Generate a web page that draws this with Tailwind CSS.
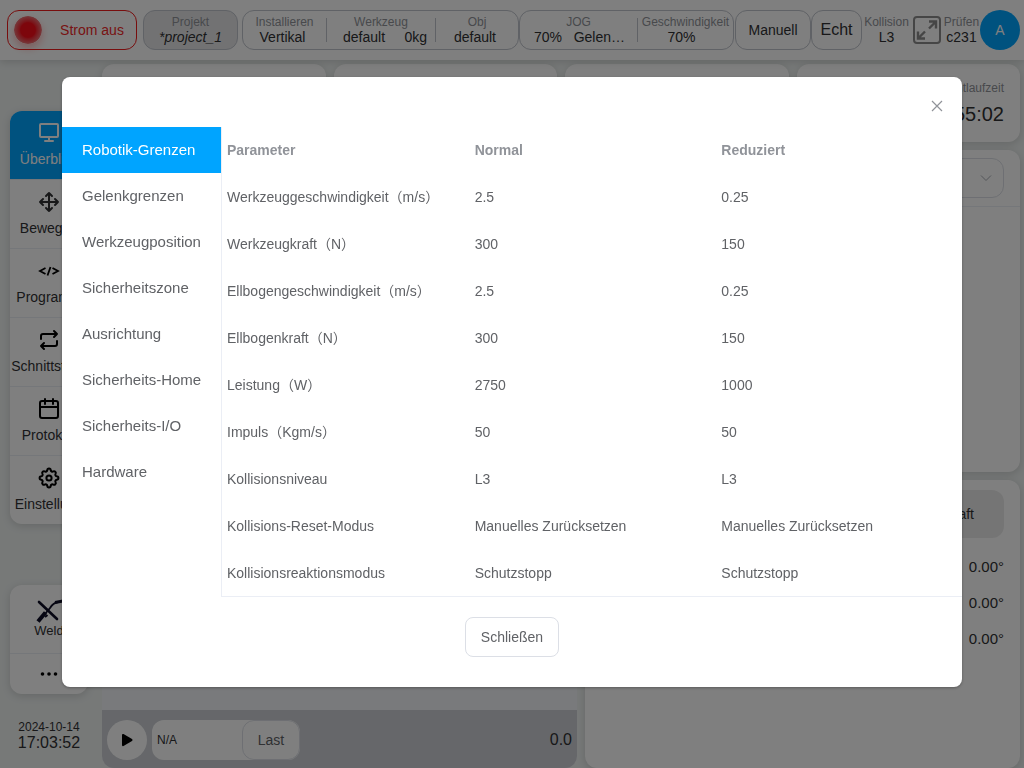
<!DOCTYPE html>
<html lang="de">

<head>
    <meta charset="UTF-8">
    <meta name="viewport" content="width=device-width, initial-scale=1.0">
    <title>Roboter - Überblick</title>
    <script src="https://cdn.jsdelivr.net/npm/@tailwindcss/browser@4"></script>
</head>

<body class="h-screen overflow-hidden bg-[#eef2f1] font-['Liberation_Sans','Noto_Sans_CJK_SC',sans-serif] text-sm text-[#303133]">

    <div class="flex h-screen flex-col">

        <!-- Header -->
        <header class="relative flex h-[60px] shrink-0 items-center justify-between bg-white pl-[7px] pr-1 shadow-[0_2px_8px_rgba(0,0,0,0.15)]">
            <button class="mr-1.5 flex h-10 w-[130px] shrink-0 items-center rounded-xl border border-[#f01c1c] pl-1.5 text-[#f02828]">
                <svg class="size-7 rounded-full shadow-[0_4px_8px_rgba(245,15,15,0.3)]" viewBox="0 0 28 28">
                    <defs>
                        <radialGradient id="led">
                            <stop offset="0.52" stop-color="#fa0c18" />
                            <stop offset="0.62" stop-color="#f42a34" />
                            <stop offset="1" stop-color="#ec7478" />
                        </radialGradient>
                    </defs>
                    <circle cx="14" cy="14" r="14" fill="url(#led)" />
                </svg>
                <span class="flex-1 pl-1.5">Strom aus</span>
            </button>

            <button class="mr-1 flex h-10 w-[95px] shrink-0 flex-col items-center justify-center rounded-xl border border-[#c0c4cc] bg-[#e4e5e7]">
                <span class="text-xs leading-[14px] text-[#909399]">Projekt</span>
                <span class="leading-4 italic">*project_1</span>
            </button>

            <div class="flex h-10 w-[277px] shrink-0 items-center rounded-xl border border-[#c0c4cc] text-center">
                <div class="w-[83px]">
                    <p class="text-xs leading-[14px] text-[#909399]">Installieren</p>
                    <p class="pr-1 leading-4">Vertikal</p>
                </div>
                <div class="h-6 w-px bg-[#c0c4cc]"></div>
                <div class="w-[108px] px-2">
                    <p class="text-xs leading-[14px] text-[#909399]">Werkzeug</p>
                    <p class="flex justify-between pl-2 leading-4"><span>default</span><span>0kg</span></p>
                </div>
                <div class="h-6 w-px bg-[#c0c4cc]"></div>
                <div class="flex-1">
                    <p class="text-xs leading-[14px] text-[#909399]">Obj</p>
                    <p class="pr-1 leading-4">default</p>
                </div>
            </div>

            <div class="flex h-10 w-[215px] shrink-0 items-center rounded-xl border border-[#c0c4cc] text-center">
                <div class="w-[117px] px-3">
                    <p class="text-xs leading-[14px] text-[#909399]">JOG</p>
                    <p class="flex justify-between pl-0.5 leading-4"><span>70%</span><span>Gelen…</span></p>
                </div>
                <div class="h-6 w-px bg-[#c0c4cc]"></div>
                <div class="flex-1">
                    <p class="text-xs leading-[14px] whitespace-nowrap text-[#909399]">Geschwindigkeit</p>
                    <p class="pr-2 leading-4">70%</p>
                </div>
            </div>

            <button class="ml-px h-10 w-[76px] shrink-0 rounded-xl border border-[#c0c4cc]">Manuell</button>
            <button class="h-10 w-[51px] shrink-0 rounded-xl border border-[#c0c4cc] text-base">Echt</button>

            <div class="w-[49px] shrink-0 text-center">
                <p class="text-xs leading-[14px] text-[#909399]">Kollision</p>
                <p class="leading-4">L3</p>
            </div>
            <button class="shrink-0 text-[#8c8c8c]" aria-label="Vollbild">
                <svg class="size-8" viewBox="0 0 32 32" fill="none" stroke="currentColor" stroke-width="2">
                    <rect x="3" y="3" width="26" height="26" rx="3" />
                    <path d="M18 7.500h7v7M25 7.500l-7 7M7 17.500v7h7M7 24.500l7-7" stroke-width="2.400" />
                </svg>
            </button>
            <div class="w-[37px] shrink-0 text-center">
                <p class="text-xs leading-[14px] text-[#909399]">Prüfen</p>
                <p class="leading-4">c231</p>
            </div>
            <button class="size-10 shrink-0 rounded-full bg-[#00a4ff] text-white">A</button>
        </header>

        <div class="flex min-h-0 flex-1">

            <!-- Sidebar -->
            <aside class="flex w-[102px] shrink-0 flex-col pl-2.5 pr-3.5">
                <nav class="mt-[51px] divide-y divide-[#ebeef5] overflow-hidden rounded-xl bg-white text-center shadow-[0_2px_8px_rgba(0,0,0,0.15)]">
                    <a href="#" class="flex h-[69px] flex-col items-center bg-[#00a4ff] pt-2.5 text-white">
                        <svg class="size-6" viewBox="0 0 24 24" fill="none" stroke="currentColor" stroke-width="2" stroke-linejoin="round" stroke-linecap="round">
                            <rect x="3" y="3" width="18" height="13" rx="1" />
                            <path d="M8 20h8M12 16v4" />
                        </svg>
                        <span class="mt-1">Überblick</span>
                    </a>
                    <a href="#" class="flex h-[69px] flex-col items-center pt-2.5">
                        <svg class="size-6" viewBox="0 0 24 24" fill="none" stroke="currentColor" stroke-width="2" stroke-linejoin="round" stroke-linecap="round">
                            <path d="M12 3v18M3 12h18M9 6l3-3 3 3M9 18l3 3 3-3M6 9l-3 3 3 3M18 9l3 3-3 3" />
                        </svg>
                        <span class="mt-1">Bewegen</span>
                    </a>
                    <a href="#" class="flex h-[69px] flex-col items-center pt-2.5">
                        <svg class="size-6 text-black" viewBox="0 0 24 24" fill="none" stroke="currentColor" stroke-width="1.800">
                            <path d="M8.500 9L3 12l5.500 3M15.500 9l5.500 3-5.500 3M13.500 8l-3 8.500" />
                        </svg>
                        <span class="mt-1">Programm</span>
                    </a>
                    <a href="#" class="flex h-[69px] flex-col items-center pt-2.5">
                        <svg class="size-6 text-black" viewBox="0 0 24 24" fill="none" stroke="currentColor" stroke-width="2" stroke-linejoin="round" stroke-linecap="round">
                            <path d="M4 11V8a2 2 0 0 1 2-2h14M17 3l3 3-3 3M20 13v3a2 2 0 0 1-2 2H4M7 15l-3 3 3 3" />
                        </svg>
                        <span class="mt-1 w-[76px] overflow-hidden whitespace-nowrap">Schnittstelle</span>
                    </a>
                    <a href="#" class="flex h-[69px] flex-col items-center pt-2.5">
                        <svg class="size-6 text-black" viewBox="0 0 24 24" fill="none" stroke="currentColor" stroke-width="2" stroke-linejoin="round" stroke-linecap="round">
                            <rect x="3" y="4" width="18" height="17" rx="2" />
                            <path d="M3 10h18M8 2v5M16 2v5" />
                        </svg>
                        <span class="mt-1">Protokoll</span>
                    </a>
                    <a href="#" class="flex h-[68px] flex-col items-center pt-2.5">
                        <svg class="size-6 text-black" viewBox="0 0 24 24" fill="none" stroke="currentColor" stroke-width="2" stroke-linejoin="round">
                            <path d="M10.300 4.300a1.700 1.700 0 0 1 3.400 0 1.700 1.700 0 0 0 2.600 1.100 1.700 1.700 0 0 1 2.300 2.300 1.700 1.700 0 0 0 1.100 2.600 1.700 1.700 0 0 1 0 3.400 1.700 1.700 0 0 0-1.100 2.600 1.700 1.700 0 0 1-2.300 2.300 1.700 1.700 0 0 0-2.600 1.100 1.700 1.700 0 0 1-3.400 0 1.700 1.700 0 0 0-2.600-1.100 1.700 1.700 0 0 1-2.300-2.300 1.700 1.700 0 0 0-1.100-2.600 1.700 1.700 0 0 1 0-3.400 1.700 1.700 0 0 0 1.100-2.600 1.700 1.700 0 0 1 2.300-2.300 1.700 1.700 0 0 0 2.600-1.100z" />
                            <circle cx="12" cy="12" r="2.600" />
                        </svg>
                        <span class="mt-1 whitespace-nowrap">Einstellung</span>
                    </a>
                </nav>

                <div class="mt-[61px] divide-y divide-[#ebeef5] rounded-xl bg-white text-center shadow-[0_2px_8px_rgba(0,0,0,0.15)]">
                    <a href="#" class="flex h-[69px] flex-col items-center pt-3.5 text-[13px]">
                        <svg class="h-6 w-7" viewBox="0 0 28 24" fill="none" stroke="#0c0c24">
                            <path d="M4 3l18 17" stroke-width="2.600" stroke-linecap="round" />
                            <path d="M3 22.500l7.500-9" stroke-width="4" />
                            <path d="M10 15l5-6q3-5 8-6" stroke-width="1.800" />
                            <path d="M20 3.500l8-1.500" stroke-width="2.800" />
                            <path d="M10 18l2.500-2" stroke-width="2" />
                        </svg>
                        <span class="leading-4">Weld</span>
                    </a>
                    <button class="flex h-10 w-full items-center justify-center" aria-label="Mehr">
                        <svg class="size-5" viewBox="0 0 20 20" fill="#000">
                            <circle cx="3.500" cy="10" r="1.800" />
                            <circle cx="10" cy="10" r="1.800" />
                            <circle cx="16.500" cy="10" r="1.800" />
                        </svg>
                    </button>
                </div>

                <div class="mt-[25px] text-center">
                    <p class="text-xs leading-4">2024-10-14</p>
                    <p class="text-base leading-4">17:03:52</p>
                </div>
            </aside>

            <!-- Content -->
            <main class="flex min-w-0 flex-1 flex-col gap-2 pt-1 pr-1">
                <div class="grid h-[78px] shrink-0 grid-cols-4 gap-2">
                    <div class="rounded-xl bg-white shadow-[0_2px_8px_rgba(0,0,0,0.15)]"></div>
                    <div class="rounded-xl bg-white shadow-[0_2px_8px_rgba(0,0,0,0.15)]"></div>
                    <div class="rounded-xl bg-white shadow-[0_2px_8px_rgba(0,0,0,0.15)]"></div>
                    <div class="rounded-xl bg-white px-4 pt-4 text-right shadow-[0_2px_8px_rgba(0,0,0,0.15)]">
                        <p class="text-xs leading-4 text-[#909399]">Gesamtlaufzeit</p>
                        <p class="mt-1 text-xl leading-7">00:55:02</p>
                    </div>
                </div>

                <div class="grid min-h-0 flex-1 grid-cols-[475fr_435fr] gap-2">
                    <section class="flex flex-col justify-end overflow-hidden rounded-xl bg-[#f2f4f8]">
                        <div class="flex h-[58px] items-center bg-[#cccfd4] px-[5px] pt-0.5">
                            <button class="flex size-10 items-center justify-center rounded-full bg-white" aria-label="Start">
                                <svg class="size-4" viewBox="0 0 16 16" fill="#000">
                                    <path d="M3 3q0-1.500 1.500-1L13 7q1.200 1 0 2l-8.500 5Q3 14.500 3 13z" />
                                </svg>
                            </button>
                            <div class="ml-[5px] flex h-10 w-[148px] items-center rounded-xl bg-white">
                                <span class="flex-1 pl-[5px] text-xs">N/A</span>
                                <button class="h-10 w-[58px] rounded-xl border border-[#dcdfe6] text-[#606266]">Last</button>
                            </div>
                            <span class="ml-auto text-base">0.0</span>
                        </div>
                    </section>

                    <div class="flex min-h-0 flex-col gap-2">
                        <section class="h-[322px] shrink-0 rounded-xl bg-white shadow-[0_2px_8px_rgba(0,0,0,0.15)]">
                            <div class="flex h-[57px] items-center justify-end border-b border-[#ebeef5] px-4">
                                <button class="flex h-10 w-52 items-center justify-end rounded-xl border border-[#dcdfe6] pr-2.5 text-[#a8abb2]" aria-label="Auswahl">
                                    <svg class="size-3.5" viewBox="0 0 14 14" fill="none" stroke="currentColor">
                                        <path d="M2 4.500l5 5 5-5" />
                                    </svg>
                                </button>
                            </div>
                        </section>
                        <section class="flex-1 rounded-xl bg-white px-4 pt-2.5 shadow-[0_2px_8px_rgba(0,0,0,0.15)]">
                            <div class="flex h-12 items-center justify-end rounded-xl bg-[#ebebeb] pr-[30px]">Kraft</div>
                            <ul class="pt-[11px] text-right text-[15px]">
                                <li class="h-9 leading-9">0.00°</li>
                                <li class="h-9 leading-9">0.00°</li>
                                <li class="h-9 leading-9">0.00°</li>
                            </ul>
                        </section>
                    </div>
                </div>
            </main>
        </div>
    </div>

    <!-- Safety dialog -->
    <div class="fixed inset-0 bg-black/50 pt-[77px]">
        <div class="mx-auto w-[900px] max-w-full rounded-lg bg-white text-[#606266] shadow-[0_1px_3px_rgba(0,0,0,0.3)]" role="dialog" aria-modal="true">
            <div class="flex h-[50px] justify-end pt-[21px] pr-[17px]">
                <button class="flex size-4 items-center justify-center text-[#909399]" aria-label="Schließen">
                    <svg class="size-4" viewBox="0 0 16 16" fill="none" stroke="currentColor" stroke-width="1.200">
                        <path d="M3 3l10 10M13 3L3 13" />
                    </svg>
                </button>
            </div>

            <div class="flex">
                <nav class="w-[159px] shrink-0 text-[15px]">
                    <a href="#" class="block h-[46px] bg-[#00a4ff] pl-5 leading-[46px] text-white">Robotik-Grenzen</a>
                    <a href="#" class="block h-[46px] pl-5 leading-[46px]">Gelenkgrenzen</a>
                    <a href="#" class="block h-[46px] pl-5 leading-[46px]">Werkzeugposition</a>
                    <a href="#" class="block h-[46px] pl-5 leading-[46px]">Sicherheitszone</a>
                    <a href="#" class="block h-[46px] pl-5 leading-[46px]">Ausrichtung</a>
                    <a href="#" class="block h-[46px] pl-5 leading-[46px]">Sicherheits-Home</a>
                    <a href="#" class="block h-[46px] pl-5 leading-[46px]">Sicherheits-I/O</a>
                    <a href="#" class="block h-[46px] pl-5 leading-[46px]">Hardware</a>
                </nav>
                <div class="min-w-0 flex-1 border-b border-l border-[#ebeef5]">
                    <table class="w-full table-fixed text-left leading-5" id="limits">
                        <thead>
                            <tr class="h-[46px] text-[#909399]">
                                <th class="px-[5px]">Parameter</th>
                                <th class="px-1.5">Normal</th>
                                <th class="px-1.5">Reduziert</th>
                            </tr>
                        </thead>
                        <tbody></tbody>
                    </table>
                </div>
            </div>

            <div class="flex justify-center pt-5 pb-[30px]">
                <button class="h-10 w-[94px] rounded-lg border border-[#dcdfe6]">Schließen</button>
            </div>
        </div>
    </div>

    <script>
        const limits = [
            ['Werkzeuggeschwindigkeit（m/s）', '2.5', '0.25'],
            ['Werkzeugkraft（N）', '300', '150'],
            ['Ellbogengeschwindigkeit（m/s）', '2.5', '0.25'],
            ['Ellbogenkraft（N）', '300', '150'],
            ['Leistung（W）', '2750', '1000'],
            ['Impuls（Kgm/s）', '50', '50'],
            ['Kollisionsniveau', 'L3', 'L3'],
            ['Kollisions-Reset-Modus', 'Manuelles Zurücksetzen', 'Manuelles Zurücksetzen'],
            ['Kollisionsreaktionsmodus', 'Schutzstopp', 'Schutzstopp'],
        ];

        const tableBody = document.getElementById('limits').getElementsByTagName('tbody')[0];
        limits.forEach(function (item) {
            const row = tableBody.insertRow();
            row.className = 'h-[47px]';
            row.innerHTML = `<td class="px-[5px] whitespace-nowrap">${item[0]}</td><td class="px-1.5">${item[1]}</td><td class="px-1.5">${item[2]}</td>`;
        });
    </script>
</body>

</html>
